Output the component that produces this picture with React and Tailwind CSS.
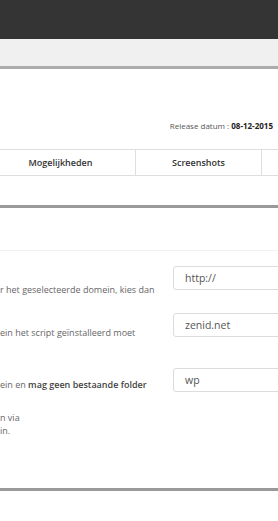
export default function App() {
  return (
    <div className="w-[278px] h-[521px] overflow-hidden bg-white font-['Open_Sans',sans-serif]">
      <div className="h-[39px] bg-[#343434]" />
      <div className="h-[27px] bg-[#f0f0f0] border-b-[3px] border-[#acacac] box-content" />

      <div className="pt-[51px] flex justify-end pr-[5px]">
        <p className="text-[8px] leading-[12px] text-[#555]">
          Release datum : <span className="font-bold text-[#222]">08-12-2015</span>
        </p>
      </div>

      <div className="mt-[17px] flex border-y border-[#dedede] h-[27px] ml-[-14px] w-[310px]">
        <div className="w-[150px] flex items-center justify-center text-[9px] font-semibold text-[#333] border-r border-[#dedede]">Mogelijkheden</div>
        <div className="w-[126px] flex items-center justify-center text-[9px] font-semibold text-[#333] border-r border-[#dedede]">Screenshots</div>
        <div className="flex-1" />
      </div>

      <div className="mt-[29px] h-[3px] bg-[#9a9a9a]" />
      <div className="h-[43px] border-b border-[#f2f2f2]" />

      <div className="pt-[15px] text-[9px] leading-[13px] text-[#666] w-[320px]">
        <div className="flex items-start">
          <div className="w-[173px] shrink-0 pt-[17px] whitespace-nowrap">r het geselecteerde domein, kies dan</div>
          <div className="h-[24px] w-[120px] shrink-0 border border-[#dcdcdc] rounded-[3px] flex items-center pl-[11px] text-[10.5px] text-[#555]">http://</div>
        </div>

        <div className="flex items-start mt-[17px]">
          <div className="w-[173px] shrink-0 pt-[13px] whitespace-nowrap">ein het script geïnstalleerd moet</div>
          <div className="h-[24px] w-[120px] shrink-0 border border-[#dcdcdc] rounded-[3px] flex items-center pl-[11px] text-[10.5px] text-[#555]">zenid.net</div>
        </div>

        <div className="flex items-start mt-[29px]">
          <div className="w-[173px] shrink-0 pt-[10px] whitespace-nowrap">
            <p>ein en <span className="font-semibold text-[#444]">mag geen bestaande folder</span></p>
            <p className="mt-[20px]">n via</p>
            <p>in.</p>
          </div>
          <div className="h-[24px] w-[120px] shrink-0 border border-[#dcdcdc] rounded-[3px] flex items-center pl-[11px] text-[10.5px] text-[#555]">wp</div>
        </div>
      </div>

      <div className="mt-[51px] h-[3px] bg-[#9a9a9a]" />
    </div>
  );
}
